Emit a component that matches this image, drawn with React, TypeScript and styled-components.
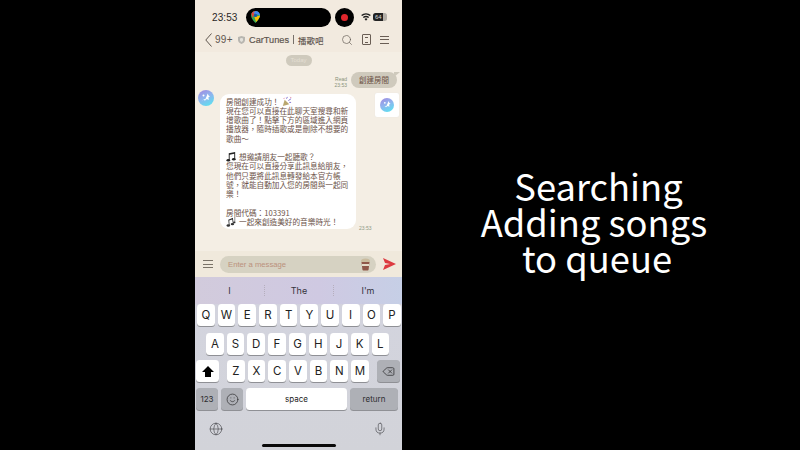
import React from "react";
import styled, { createGlobalStyle } from "styled-components";
import { Search, Globe, Mic, Delete, Smile } from "lucide-react";

const Global = createGlobalStyle`
  html, body { margin: 0; padding: 0; background: #000; }
  #root { width: 800px; height: 450px; overflow: hidden; }
  * { box-sizing: border-box; }
`;

const Page = styled.div`
  width: 800px; height: 450px; background: #000; display: flex;
  font-family: "Liberation Sans", "Noto Sans CJK TC", sans-serif; overflow: hidden;
`;
const Phone = styled.div`
  width: 207px; height: 450px; margin-left: 195px; display: flex; flex-direction: column; background: #f4eee4;
`;
const StatusBar = styled.div`
  height: 27px; background: #f2eadf; display: flex; align-items: center; padding: 7px 0 0 17px; color: #2a2725; flex: none;
`;
const Clock = styled.span`
  font-size: 10px; letter-spacing: 0.1px; width: 34px;
`;
const Island = styled.div`
  width: 85px; height: 19px; border-radius: 10px; background: #000; display: flex; align-items: center; padding-left: 5px;
`;
const RecDot = styled.div`
  width: 19px; height: 19px; border-radius: 50%; background: #000; margin-left: 4px; display: flex; align-items: center; justify-content: center;
  &::after { content: ""; width: 7px; height: 7px; border-radius: 50%; background: #e0262c; }
`;
const StatusIcons = styled.div`
  display: flex; align-items: center; gap: 2px; margin-left: 7px;
`;
const Battery = styled.div`
  width: 14px; height: 8px; border-radius: 2.5px; background: linear-gradient(90deg, #222 70%, #b5b0a8 70%); color: #ddd; font-size: 6px; line-height: 8px; padding-left: 2px;
`;
const Header = styled.div`
  height: 25px; background: #f2eadf; display: flex; align-items: center; padding-left: 10px; color: #5f564f; flex: none;
`;
const Unread = styled.span`
  font-size: 10px; margin-left: 3px; width: 23px; letter-spacing: 0.3px; font-weight: 500;
`;
const Title = styled.span`
  font-size: 9.2px; margin-left: 4px; width: 39px; color: #5f564f; -webkit-text-stroke: 0.2px #5f564f; white-space: nowrap;
`;
const Divider = styled.span`
  width: 1px; height: 9px; background: #77706a; margin: 0 4px 0 5px;
`;
const Room = styled.span`
  font-size: 8.5px; font-weight: 500; color: #5f564f; width: 26px; white-space: nowrap;
`;
const HeaderIcons = styled.div`
  display: flex; align-items: center; margin-left: 17px; gap: 9px;
`;
const Book = styled.div`
  width: 9px; height: 11px; border: 1px solid #6a5e55; border-radius: 1px; display: flex; align-items: center; justify-content: center;
  &::after { content: ""; width: 3px; height: 4px; border-top: 1px solid #6a5e55; border-bottom: 1px solid #6a5e55; }
`;
const Chat = styled.div`
  height: 199px; background: #f4eee4; padding: 3px 3px 0 0; display: flex; flex-direction: column; flex: none;
`;
const DatePill = styled.div`
  width: 26px; height: 11px; border-radius: 5.5px; background: #cfcabd; align-self: center; margin-left: 3px; color: #e4dfd4;
  font-size: 6px; line-height: 11px; text-align: center;
`;
const SentRow = styled.div`
  display: flex; justify-content: flex-end; align-items: flex-end; margin-top: 6px; gap: 4px; padding-right: 2px;
`;
const ReadInfo = styled.div`
  font-size: 5px; line-height: 6px; color: #88917a; text-align: right;
`;
const SentBubble = styled.div`
  position: relative; width: 46px; height: 16px; border-radius: 8px; background: #cfcabd; color: #6b4f42; font-size: 7.5px; line-height: 16px; text-align: center;
  font-family: "Noto Sans CJK TC", sans-serif;
  &::after { content: ""; position: absolute; right: -3px; top: 0; border-left: 6px solid #cfcabd; border-bottom: 5px solid transparent; }
`;
const ReceivedRow = styled.div`
  display: flex; align-items: flex-start; margin-top: 2px; padding-left: 3px; position: relative;
`;
const Bubble = styled.div`
  width: 136px; height: 135px; border-radius: 9px; background: #fff; margin: 4px 0 0 6px; padding: 2.5px 4px 0 6px;
  font-size: 7.65px; color: #6b5248; font-family: "Noto Sans CJK TC", sans-serif; flex: none;
`;
const BubbleLine = styled.div`
  height: 9.25px; line-height: 9.25px; white-space: nowrap; display: flex; align-items: center; gap: 2px;
`;
const Time = styled.span`
  font-size: 5px; color: #8f9a84; align-self: flex-end; margin-left: 3px; margin-bottom: -2px;
`;
const SideCard = styled.div`
  position: absolute; right: 0; top: 3px; width: 24px; height: 24px; background: #fff; border-radius: 2px; display: flex; align-items: center; justify-content: center;
  box-shadow: 0 0 1px #ddd;
`;
const InputBar = styled.div`
  height: 26px; background: #f0e9dc; display: flex; align-items: center; padding: 0 6px 0 8px; flex: none; justify-content: space-between;
`;
const BarsIcon = styled.div<{ $w: number; $gap: number; $color: string }>`
  width: ${(p) => p.$w}px; display: flex; flex-direction: column; gap: ${(p) => p.$gap}px; flex: none;
  &::before, &::after, & > i { content: ""; display: block; height: 1px; background: ${(p) => p.$color}; }
`;
const InputField = styled.div`
  width: 156px; height: 17px; border-radius: 9px; background: #d6d2c2; display: flex; align-items: center; justify-content: space-between; padding: 0 5px 0 8px;
  color: #bb917c; font-size: 7.7px;
`;
const Keyboard = styled.div`
  flex: 1; background: linear-gradient(#cfc9dc 0, #d3d4de 35px, #d2d3d9 100%); display: flex; flex-direction: column; font-family: Inter, sans-serif;
`;
const Suggestions = styled.div`
  height: 27px; display: grid; grid-template-columns: 69px 69px 69px; align-items: center; text-align: center; font-size: 9px; color: #35333c; background: linear-gradient(90deg, #d2cbdc, #cfc9e2 60%, #c6cfe6);
`;
const Cell = styled.span<{ $sep?: boolean }>`
  line-height: 11px; border-left: ${(p) => (p.$sep ? "1px dotted #b5aebd" : "none")};
`;
const KeyRow = styled.div<{ $pad?: number; $top?: number }>`
  display: flex; gap: 3px; padding-left: ${(p) => p.$pad ?? 2}px; margin-top: ${(p) => p.$top ?? 0}px; height: 22px;
`;
const Key = styled.div<{ $w?: number; $dark?: boolean; $size?: number; $gapBefore?: number }>`
  width: ${(p) => p.$w ?? 17.7}px; height: 22px; border-radius: 3.5px; background: ${(p) => (p.$dark ? "#aeb0b6" : "#fff")};
  margin-left: ${(p) => p.$gapBefore ?? 0}px;
  color: ${(p) => (p.$dark ? "#2c2c2e" : "#222")}; font-size: ${(p) => p.$size ?? 11.5}px; display: flex; align-items: center; justify-content: center;
  box-shadow: 0 1px 0 #8f9095; flex: none;
`;
const BottomBar = styled.div`
  display: flex; justify-content: space-between; padding: 12px 15px 0 14px; color: #3b3b3f;
`;
const Home = styled.div`
  width: 74px; height: 3px; border-radius: 2px; background: #0a0a0a; align-self: center; margin-top: 8px;
`;
const Caption = styled.div`
  width: 398px; padding-top: 167px; text-align: center; color: #fff; font-size: 36.3px; line-height: 36px;
  font-family: "Noto Sans CJK TC", "Noto Sans", sans-serif;
`;
const CaptionLine = styled.div<{ $right: number }>`
  padding-right: ${(p) => p.$right}px;
  white-space: nowrap;
`;

const Avatar = ({ size, id }: { size: number; id: string }) => (
  <svg width={size} height={size} viewBox="0 0 16 16" style={{ flex: "none" }}>
    <defs>
      <linearGradient id={id} x1="0.1" y1="0" x2="0.6" y2="1">
        <stop offset="0" stopColor="#a18ae0" />
        <stop offset="0.5" stopColor="#8fb4ee" />
        <stop offset="1" stopColor="#62dcf0" />
      </linearGradient>
    </defs>
    <circle cx="8" cy="8" r="8" fill={`url(#${id})`} />
    <path d="M3.5 11.5l2.5-2.5 1.2.5 1.8-4 .6-2 1 2 1.4 1-1.6.8.4 2.6-2-.8-2 1.6-1-1.2z" fill="#fff" />
    <circle cx="5.5" cy="5.5" r="1" fill="#fff" />
  </svg>
);

const MapsPin = () => (
  <svg width="9" height="12" viewBox="0 0 9 12">
    <path d="M4.5 0C2 0 0 2 0 4.4 0 7.4 4.5 12 4.5 12S9 7.4 9 4.4C9 2 7 0 4.5 0z" fill="#34a853" />
    <path d="M0.4 3C1 1.2 2.6 0 4.5 0L1.6 7z" fill="#ea4335" />
    <path d="M4.5 0C7 0 9 2 9 4.4L2 2z" fill="#4285f4" />
    <path d="M9 4.4C9 6 7 9 5 11L3.5 6z" fill="#fbbc04" />
    <circle cx="4.5" cy="4.4" r="1.6" fill="#1a56b0" />
  </svg>
);

const Wifi = () => (
  <svg width="10" height="8" viewBox="0 0 12 9" fill="#1c1c1c">
    <path d="M6 9L4.2 6.8a2.8 2.8 0 0 1 3.6 0zM3.3 5.8L2.2 4.5a5.8 5.8 0 0 1 7.6 0L8.7 5.8a4.2 4.2 0 0 0-5.4 0zM1.3 3.4L.2 2.1a8.8 8.8 0 0 1 11.6 0l-1.1 1.3a7.2 7.2 0 0 0-9.4 0z" />
  </svg>
);

const BackChevron = () => (
  <svg width="7" height="14" viewBox="0 0 7 14" fill="none" stroke="#5f564f" strokeWidth="1">
    <path d="M6.5 .5L.8 7l5.7 6.5" />
  </svg>
);

const ShieldBadge = () => (
  <svg width="7" height="8" viewBox="0 0 7 8">
    <path d="M3.5 0L7 1v3c0 2-1.5 3.3-3.5 4C1.5 7.3 0 6 0 4V1z" fill="#b8b6b0" />
    <path d="M3.5 2L5 2.5v1.5c0 1-.7 1.5-1.5 1.9C2.7 5.5 2 5 2 4V2.5z" fill="#e4e2dc" />
  </svg>
);

const NoteIcon = () => (
  <svg width="11" height="11" viewBox="0 0 12 12" fill="#222" style={{ flex: "none" }}>
    <path d="M3 2.5l7-1.5v8h-1V3L4 4v6H3z" />
    <ellipse cx="2.5" cy="10" rx="2" ry="1.4" />
    <ellipse cx="8.5" cy="9" rx="2" ry="1.4" />
  </svg>
);

const TiltedNotes = () => (
  <svg width="11" height="11" viewBox="0 0 12 12" fill="#333" style={{ flex: "none" }}>
    <path d="M2.5 4l5-2 .8 6h-.9l-.6-4.3L3.5 5l.5 5h-.9z" />
    <ellipse cx="2.5" cy="10.3" rx="1.9" ry="1.3" />
    <ellipse cx="7" cy="8.8" rx="1.9" ry="1.3" />
    <path d="M10 1v6h-.6V1z" />
    <ellipse cx="9" cy="7" rx="1.3" ry="1" />
  </svg>
);

const Party = () => (
  <svg width="11" height="11" viewBox="0 0 12 12" style={{ flex: "none" }}>
    <path d="M2 11l2-7 5 5z" fill="#b9a76f" />
    <path d="M6 3l1-2M8 5l3-2M9 7l2 0" stroke="#7b6ccf" strokeWidth="1" />
    <path d="M3 3l1-1M10 1l1 1" stroke="#d9688a" strokeWidth="1" />
  </svg>
);

const Cup = () => (
  <svg width="11" height="13" viewBox="0 0 11 13">
    <ellipse cx="5.5" cy="3" rx="4.5" ry="2.5" fill="#c9bb9e" />
    <path d="M1.5 4h8L8.6 11.5a1 1 0 0 1-1 1h-4.2a1 1 0 0 1-1-1z" fill="#8f5648" />
    <rect x="2" y="6" width="7" height="2" fill="#e3d9c6" />
  </svg>
);

const PaperPlane = () => (
  <svg width="13" height="12" viewBox="0 0 13 12">
    <path d="M0 0l13 6L0 12l2-5 5-1-5-1z" fill="#dd3b41" />
  </svg>
);

const Shift = () => (
  <svg width="12" height="11" viewBox="0 0 12 11">
    <path d="M6 0l6 6H9v5H3V6H0z" fill="#000" />
  </svg>
);

const row1 = "QWERTYUIOP".split("");
const row2 = "ASDFGHJKL".split("");
const row3 = "ZXCVBNM".split("");

export default function App() {
  return (
    <Page>
      <Global />
      <Phone>
        <StatusBar>
          <Clock>23:53</Clock>
          <Island><MapsPin /></Island>
          <RecDot />
          <StatusIcons>
            <Wifi />
            <Battery>64</Battery>
          </StatusIcons>
        </StatusBar>
        <Header>
          <BackChevron />
          <Unread>99+</Unread>
          <ShieldBadge />
          <Title>CarTunes</Title>
          <Divider />
          <Room>播歌吧</Room>
          <HeaderIcons>
            <Search size={12} strokeWidth={1.3} />
            <Book />
            <BarsIcon $w={9} $gap={2.5} $color="#6a5e55"><i /></BarsIcon>
          </HeaderIcons>
        </Header>
        <Chat>
          <DatePill>Today</DatePill>
          <SentRow>
            <ReadInfo>Read<br />23:53</ReadInfo>
            <SentBubble>創建房間</SentBubble>
          </SentRow>
          <ReceivedRow>
            <Avatar size={16} id="av1" />
            <Bubble>
              <BubbleLine>房間創建成功！ <Party /></BubbleLine>
              <BubbleLine>現在您可以直接在此聊天室搜尋和新</BubbleLine>
              <BubbleLine>增歌曲了！點擊下方的區域進入網頁</BubbleLine>
              <BubbleLine>播放器，隨時插歌或是刪除不想要的</BubbleLine>
              <BubbleLine>歌曲～</BubbleLine>
              <BubbleLine />
              <BubbleLine><NoteIcon /> 想邀請朋友一起聽歌？</BubbleLine>
              <BubbleLine>您現在可以直接分享此訊息給朋友，</BubbleLine>
              <BubbleLine>他們只要將此訊息轉發給本官方帳</BubbleLine>
              <BubbleLine>號，就能自動加入您的房間與一起同</BubbleLine>
              <BubbleLine>樂！</BubbleLine>
              <BubbleLine />
              <BubbleLine>房間代碼：103391</BubbleLine>
              <BubbleLine><TiltedNotes /> 一起來創造美好的音樂時光！</BubbleLine>
            </Bubble>
            <Time>23:53</Time>
            <SideCard><Avatar size={14} id="av2" /></SideCard>
          </ReceivedRow>
        </Chat>
        <InputBar>
          <BarsIcon $w={10} $gap={2.5} $color="#7a7368"><i /></BarsIcon>
          <InputField>
            Enter a message
            <Cup />
          </InputField>
          <PaperPlane />
        </InputBar>
        <Keyboard>
          <Suggestions>
            <Cell>I</Cell>
            <Cell $sep>The</Cell>
            <Cell $sep>I'm</Cell>
          </Suggestions>
          <KeyRow>{row1.map((k) => <Key key={k}>{k}</Key>)}</KeyRow>
          <KeyRow $pad={11} $top={7}>{row2.map((k) => <Key key={k}>{k}</Key>)}</KeyRow>
          <KeyRow $pad={1} $top={5}>
            <Key $w={23}><Shift /></Key>
            {row3.map((k, i) => <Key key={k} $gapBefore={i === 0 ? 5 : 0}>{k}</Key>)}
            <Key $w={23} $dark $gapBefore={5}><Delete size={13} strokeWidth={1.4} /></Key>
          </KeyRow>
          <KeyRow $pad={1} $top={6}>
            <Key $w={22} $dark $size={8}>123</Key>
            <Key $w={22} $dark><Smile size={13} strokeWidth={1.3} /></Key>
            <Key $w={101} $size={8}>space</Key>
            <Key $w={48} $dark $size={8}>return</Key>
          </KeyRow>
          <BottomBar>
            <Globe size={14} strokeWidth={1} />
            <Mic size={14} strokeWidth={1} />
          </BottomBar>
          <Home />
        </Keyboard>
      </Phone>
      <Caption>
        <CaptionLine $right={5}>Searching</CaptionLine>
        <CaptionLine $right={14}>Adding songs</CaptionLine>
        <CaptionLine $right={8}>to queue</CaptionLine>
      </Caption>
    </Page>
  );
}
